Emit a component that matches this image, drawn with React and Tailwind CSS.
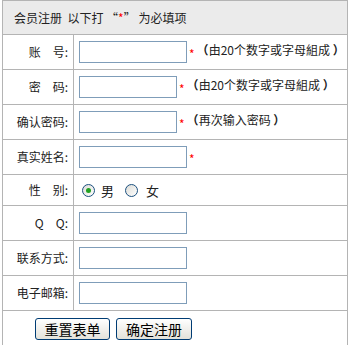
import React from 'react';

const Star = () => <span className="inline-block translate-y-[4px] text-[#ff0000] mx-[2px]">*</span>;

const Hint = ({ children }) => (
    <span className="text-[#222]">
        <span className="font-bold">（</span>
        {children}
        <span className="font-bold"> ）</span>
    </span>
);

const Field = ({ w = 'w-[108px]' }) => (
    <input type="text" className={`${w} h-[22px] border border-[#7f9db9] bg-white outline-none align-middle`} />
);

const Radio = ({ checked }) => (
    <span className="inline-flex items-center justify-center w-[13px] h-[13px] rounded-full border border-[#1c5180] bg-gradient-to-br from-[#dcdcd7] to-white align-middle">
        {checked && <span className="w-[5px] h-[5px] rounded-full bg-[#21a121]" />}
    </span>
);

const Row = ({ label, children, h = 'h-[35px]' }) => (
    <tr className={h}>
        <td className="w-[71px] border border-[#b4b4b4] text-right pr-[5px] whitespace-pre">{label}</td>
        <td className="border border-[#b4b4b4] pl-[5px]">{children}</td>
    </tr>
);

export default function App() {
    return (
        <div className="w-[350px] h-[345px] bg-white overflow-hidden" style={{ fontFamily: '"Noto Sans CJK SC", "Liberation Sans", sans-serif' }}>
            <table className="ml-[2px] w-[346px] border-collapse text-[12px] text-[#222] leading-none">
                <tbody>
                    <tr className="h-[34px] bg-[#ebebeb]">
                        <td colSpan={2} className="border border-[#b4b4b4] pl-[11px]">
                            会员注册&nbsp;&nbsp;以下打 “<span className="text-[#ff0000]">*</span>” 为必填项
                        </td>
                    </tr>
                    <Row label="账　号:">
                        <Field />
                        <Star />
                        <Hint>由20个数字或字母組成</Hint>
                    </Row>
                    <Row label="密　码:">
                        <Field w="w-[98px]" />
                        <Star />
                        <Hint>由20个数字或字母組成</Hint>
                    </Row>
                    <Row label="确认密码:">
                        <Field w="w-[98px]" />
                        <Star />
                        <Hint>再次输入密码</Hint>
                    </Row>
                    <Row label="真实姓名:">
                        <Field />
                        <Star />
                    </Row>
                    <Row label="性　别:" h="h-[31px]">
                        <div className="flex items-center pl-[3px] text-[13px] text-[#222]">
                            <Radio checked />
                            <span className="ml-[6px]">男</span>
                            <span className="ml-[11px]"><Radio /></span>
                            <span className="ml-[8px]">女</span>
                        </div>
                    </Row>
                    <Row label="Q　Q:">
                        <Field />
                    </Row>
                    <Row label="联系方式:">
                        <Field />
                    </Row>
                    <Row label="电子邮箱:">
                        <Field />
                    </Row>
                    <tr className="h-[36px]">
                        <td colSpan={2} className="border border-[#b4b4b4] pl-[32px] align-top pt-[7px]">
                            <div className="flex gap-[6px]">
                                <button className="w-[75px] h-[22px] rounded-[3px] border border-[#003c74] bg-gradient-to-b from-white to-[#e3e2da] text-[14px] text-black leading-none">重置表单</button>
                                <button className="w-[76px] h-[22px] rounded-[3px] border border-[#003c74] bg-gradient-to-b from-white to-[#e3e2da] text-[14px] text-black leading-none">确定注册</button>
                            </div>
                        </td>
                    </tr>
                </tbody>
            </table>
        </div>
    );
}
